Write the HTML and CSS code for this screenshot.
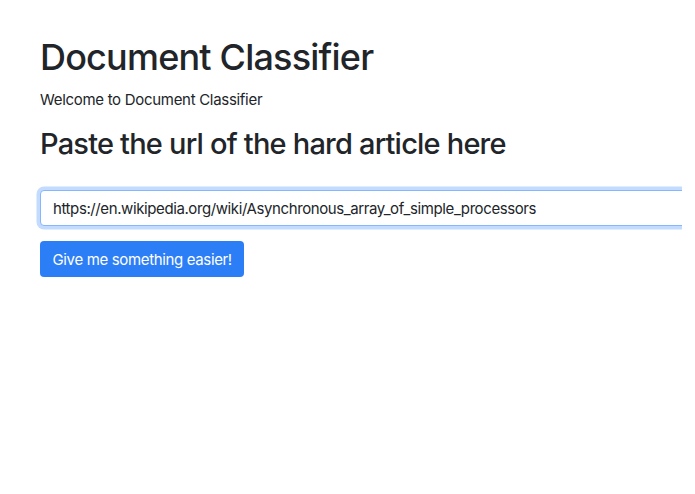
FILE: index.html
```html
<!DOCTYPE html>
<html lang="en">
<head>
<meta charset="utf-8">
<title>Document Classifier</title>
<link rel="stylesheet" href="styles.css">
</head>
<body>
<main class="page">
  <h1 class="title">Document Classifier</h1>
  <p class="welcome">Welcome to Document Classifier</p>
  <h2 class="subtitle">Paste the url of the hard article here</h2>
  <form class="form">
    <div class="field">
      <input class="url-input" type="text" value="https://en.wikipedia.org/wiki/Asynchronous_array_of_simple_processors">
    </div>
    <button class="btn" type="button">Give me something easier!</button>
  </form>
</main>
</body>
</html>
```

FILE: styles.css
```css
html, body {
  margin: 0;
  padding: 0;
  background: #fff;
}
body {
  font-family: Inter, "Noto Sans", Roboto, "Liberation Sans", sans-serif;
  color: #212529;
}
.page {
  width: 682px;
  height: 494px;
  overflow: hidden;
  box-sizing: border-box;
  padding: 35px 0 0 40px;
}
.title {
  margin: 0;
  font-size: 36px;
  font-weight: 500;
  line-height: 44px;
  letter-spacing: -0.8px;
}
.welcome {
  margin: 10px 0 0;
  font-size: 15px;
  line-height: 22px;
  letter-spacing: -0.3px;
}
.subtitle {
  margin: 15px 0 0;
  font-size: 29px;
  font-weight: 500;
  line-height: 36px;
  letter-spacing: -0.8px;
}
.form {
  margin: 0;
  padding-top: 25px;
}
.field {
  padding: 3px 0 3px 3px;
  margin-left: -3px;
}
.url-input {
  display: block;
  width: 700px;
  height: 36px;
  box-sizing: border-box;
  margin: 0;
  padding: 0 12px;
  border: 1px solid #86b7fe;
  border-radius: 4px;
  box-shadow: 0 0 0 3.5px rgba(13, 110, 253, 0.25);
  font-family: inherit;
  font-size: 15px;
  letter-spacing: -0.4px;
  color: #212529;
  outline: none;
}
.btn {
  display: block;
  margin-top: 12px;
  height: 36px;
  padding: 0 12.5px;
  border: none;
  border-radius: 4px;
  background: #2c7ef6;
  color: #fff;
  font-family: inherit;
  font-size: 15px;
  letter-spacing: -0.35px;
}
```
